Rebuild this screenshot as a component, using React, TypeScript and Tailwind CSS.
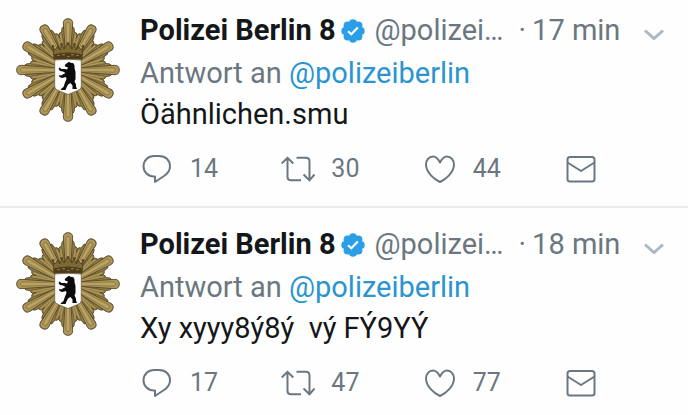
type Tweet = {
  id: number;
  name: string;
  handle: string;
  time: string;
  replyTo: string;
  text: string;
  replies: number;
  retweets: number;
  likes: number;
};

const tweets: Tweet[] = [
  {
    id: 1,
    name: "Polizei Berlin 8",
    handle: "@polizei…",
    time: "17 min",
    replyTo: "@polizeiberlin",
    text: "Öähnlichen.smu",
    replies: 14,
    retweets: 30,
    likes: 44,
  },
  {
    id: 2,
    name: "Polizei Berlin 8",
    handle: "@polizei…",
    time: "18 min",
    replyTo: "@polizeiberlin",
    text: "Xy xyyy8ý8ý  vý FÝ9YÝ",
    replies: 17,
    retweets: 47,
    likes: 77,
  },
];

const angles = [0, 30, 60, 90, 120, 150, 180, 210, 240, 270, 300, 330];

function PoliceStar() {
  return (
    <svg viewBox="0 0 104 104" className="block size-[104px]" aria-hidden="true">
      {/* stepped wedges that fill the body of the star */}
      {angles.map((a) => (
        <path
          key={a}
          transform={`rotate(${a} 52 52)`}
          d="M52 52L42.800 17Q43.500 14 45.500 14.500L46 10.500Q46.500 8.500 48 9H56Q57.500 8.500 58 10.500L58.500 14.500Q60.500 14 61.200 17Z"
          fill="#9a854b"
          stroke="#5a4b28"
          strokeWidth="1"
          strokeLinejoin="round"
        />
      ))}
      <circle cx="52" cy="52" r="33" fill="#927d45" />
      {/* fine radial engraving */}
      {angles.map((a) => (
        <g key={a} transform={`rotate(${a} 52 52)`} fill="none">
          <path d="M52 52L44.300 17M52 52L59.700 17" stroke="#b39d5f" strokeWidth="1" />
          <path d="M52 52L46 15M52 52L58 15" stroke="#66552a" strokeWidth=".7" />
        </g>
      ))}
      {/* long rays */}
      {angles.map((a) => (
        <g key={a} transform={`rotate(${a} 52 52)`} strokeLinecap="round" fill="none">
          <path d="M50.500 52L47.300 5.200Q47.500 .7 52 .7Q56.500 .7 56.700 5.200L53.500 52Z" fill="#ad9659" stroke="#54462a" strokeWidth=".9" />
          <path d="M51 38L49.600 6Q52 2.500 54.400 6L53 38" stroke="#857139" strokeWidth=".6" />
          <path d="M52 40V6" stroke="#bda768" strokeWidth="1.700" />
        </g>
      ))}
      {/* crown */}
      <path
        d="M37 29L39 32L42 28L43.500 32L46 27L48 31L50 27.500L52 26L54 27.500L56 31L58 27L60.500 32L62 28L65 32L67 29L66 41H38Z"
        fill="#7e6935"
        stroke="#463719"
        strokeWidth=".8"
      />
      <path d="M38 36.500Q52 32.500 66 36.500L65.500 41H38.500Z" fill="#4b3c1c" />
      <path d="M41 37.500H44M46 36.700H49M55 36.700H58M60 37.500H63M51 38.500H54" stroke="#8b733a" strokeWidth="1.200" />
      <g fill="#5a4820">
        <circle cx="37" cy="28.500" r="1.400" />
        <circle cx="45.500" cy="26.500" r="1.400" />
        <circle cx="52" cy="25.500" r="1.500" />
        <circle cx="58.500" cy="26.500" r="1.400" />
        <circle cx="67" cy="28.500" r="1.400" />
      </g>
      {/* shield and bear */}
      <path
        d="M38.700 42Q52 40.500 65.300 42V69Q65.300 71.500 60.500 73L52 76.500L43.500 73Q38.700 71.500 38.700 69Z"
        fill="#fdfdfd"
        stroke="#75613a"
        strokeWidth=".8"
      />
      <path
        d="M50.500 45.500L52 44.500L53 43.800L54.500 44.800L57.500 45.300L58.500 47.500V50L59.500 54V61L58.500 63.500L60 66.500V68.500L61 71H56.500V67.500L54.500 65L52 66.500L50.500 69.500L49.500 72H44.500L45.500 70.500L47.500 69L49 64.500L50.500 61L50 59L46 60L43.500 59L43 57L45 57.500L49.500 55L47 53.500L44 53L42.500 51L43.500 49.500L45.500 51H48.500L51 51.500L52 49.500L49 48.500L48.800 47Z"
        fill="#0b0b0b"
      />
    </svg>
  );
}

function VerifiedBadge() {
  return (
    <svg viewBox="0 0 24 24" className="size-6 shrink-0" role="img" aria-label="Verifiziert">
      <g fill="#2a9fe8">
        <circle cx="12" cy="12" r="9.500" />
        <circle cx="12" cy="4.300" r="4" />
        <circle cx="17.400" cy="6.600" r="4" />
        <circle cx="19.700" cy="12" r="4" />
        <circle cx="17.400" cy="17.400" r="4" />
        <circle cx="12" cy="19.700" r="4" />
        <circle cx="6.600" cy="17.400" r="4" />
        <circle cx="4.300" cy="12" r="4" />
        <circle cx="6.600" cy="6.600" r="4" />
      </g>
      <path d="M7 12.300L10.300 15.300L16.800 8.500" fill="none" stroke="#fff" strokeWidth="2.200" />
    </svg>
  );
}

const iconClass = "h-[30px] w-[34px] shrink-0 fill-none stroke-[#6b7780] stroke-2";

function ReplyIcon() {
  return (
    <svg viewBox="0 0 34 30" className={iconClass} strokeLinejoin="round">
      <path d="M14 2H19C26 2 30 6.500 30 12.300C30 16.500 28 19.500 24 22L15 28V22.500H14C8 22.500 3.500 18 3.500 12.300C3.500 6.500 8 2 14 2Z" />
    </svg>
  );
}

function RetweetIcon() {
  return (
    <svg viewBox="0 0 34 30" className={iconClass}>
      <path d="M.7 9.500L6.500 3.800L12.300 9.500M6.500 4.500V23Q6.500 26.300 10 26.300H20" />
      <path d="M15.500 3.800H25Q28.500 3.800 28.500 7.500V26M22.500 20.500L28.500 26.300L33.500 20.500" />
    </svg>
  );
}

function HeartIcon() {
  return (
    <svg viewBox="0 0 34 30" className={iconClass} strokeLinejoin="round">
      <path d="M17 8.500C15 4.500 13 2.500 10 2.500C6 2.500 3 6 3 10.500C3 18.500 11.500 25.500 17 28C22.500 25.500 31 18.500 31 10.500C31 6 28 2.500 24 2.500C21 2.500 19 4.500 17 8.500Z" />
    </svg>
  );
}

function MailIcon() {
  return (
    <svg viewBox="0 0 34 30" className={iconClass} strokeLinejoin="round">
      <rect x="3.500" y="3" width="27" height="24.500" rx="2.500" />
      <path d="M3.500 8.500L17 17L30.500 8.500" />
    </svg>
  );
}

function TweetItem({ tweet }: { tweet: Tweet }) {
  return (
    <article className="flex gap-5 border-b-2 border-[#ececec] pt-4 pb-[22px] pl-4 first:pt-2.5 last:border-b-0 last:pb-0">
      <div className="mt-2 shrink-0">
        <PoliceStar />
      </div>
      <div className="min-w-0 flex-1">
        <header className="flex h-[42px] items-center pr-6 whitespace-nowrap">
          <h2 className="font-bold text-[#14171a]">{tweet.name}</h2>
          <span className="mr-2.5 ml-[5px]">
            <VerifiedBadge />
          </span>
          <span>{tweet.handle}</span>
          <span className="mr-1.5 ml-[15px]">·</span>
          <time>{tweet.time}</time>
          <button type="button" aria-label="Mehr" className="ml-auto pt-2">
            <svg viewBox="0 0 20 12" className="h-3 w-5 fill-none stroke-[#aab8c2] stroke-3">
              <path d="M1 1.500L10 9.500L19 1.500" />
            </svg>
          </button>
        </header>
        <p className="leading-[42px]">
          Antwort an{" "}
          <a href="#polizeiberlin" className="text-[#2b94d1]">
            {tweet.replyTo}
          </a>
        </p>
        <p className="leading-10 whitespace-pre-wrap text-[#14171a]">{tweet.text}</p>
        <div className="mt-5 mr-[90px] flex h-[30px] items-center justify-between text-[25px]">
          <button type="button" aria-label="Antworten" className="flex items-center gap-4">
            <ReplyIcon />
            <span>{tweet.replies}</span>
          </button>
          <button type="button" aria-label="Retweeten" className="flex items-center gap-4">
            <RetweetIcon />
            <span>{tweet.retweets}</span>
          </button>
          <button type="button" aria-label="Gefällt mir" className="flex items-center gap-4">
            <HeartIcon />
            <span>{tweet.likes}</span>
          </button>
          <button type="button" aria-label="Direktnachricht">
            <MailIcon />
          </button>
        </div>
      </div>
    </article>
  );
}

export default function App() {
  return (
    <main className="min-h-screen bg-[#fefefe] font-[Roboto,sans-serif] text-[29px] text-[#6b7780]">
      {tweets.map((tweet) => (
        <TweetItem key={tweet.id} tweet={tweet} />
      ))}
    </main>
  );
}
